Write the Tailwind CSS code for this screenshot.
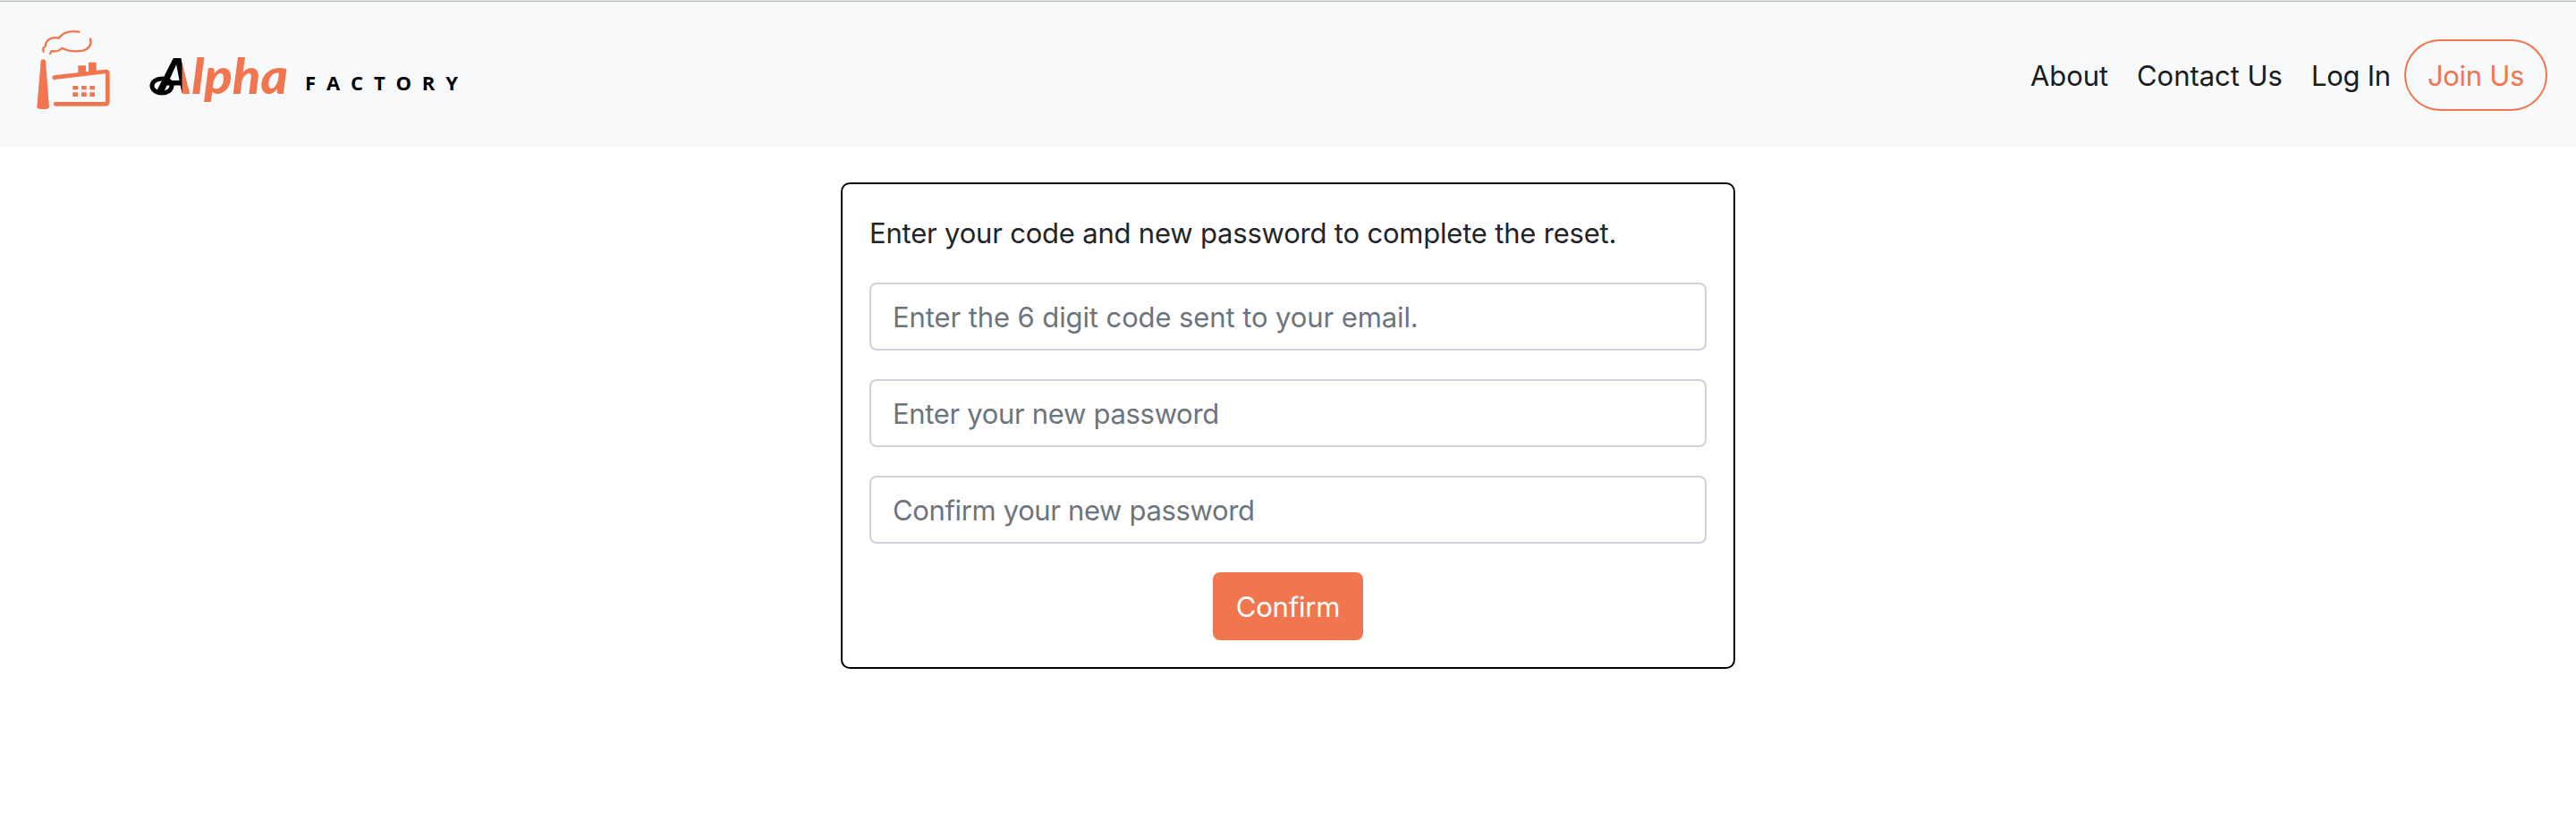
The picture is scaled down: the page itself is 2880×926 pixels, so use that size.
<!DOCTYPE html>
<html lang="en">
<head>
<meta charset="utf-8">
<title>Alpha Factory</title>
<script src="https://cdn.jsdelivr.net/npm/@tailwindcss/browser@4"></script>
</head>
<body class="min-h-screen bg-white font-['Inter',sans-serif] text-[31px] leading-[48px] font-normal text-[#212529]">
<header class="flex h-[164px] items-start justify-between border-t border-[#e4e6e6] bg-[#f8f9fb] pr-8 pl-10 shadow-[inset_0_1px_0_#b4b8b8]">
  <a href="#" class="flex pt-[31px]" aria-label="Alpha Factory">
    <svg class="h-[92px] w-[84px]" viewBox="60 96 252 276" fill="none" stroke="#f1764f" stroke-linecap="round" stroke-linejoin="round">
      <path d="M86 173C83 163 86 158 92 156C93 134 112 122 138 128C153 105 180 103 205 107" stroke-width="7"/>
      <path d="M243 130C248 150 238 164 218 170C194 174 165 170 148 161C137 173 126 174 113 171L108 180" stroke-width="7"/>
      <path d="M77 205Q78 199 85 199Q92 199 93 205L105 360Q104 366 85 366Q65 366 64 360Z" fill="#f1764f" stroke="none"/>
      <path d="M122 260L293 240Q301 239 301 246V341Q301 349 293 349H126" stroke-width="14"/>
      <path d="M202 220h26v28h-26zM237 209h26v36h-26zM184 288h17v13h-17zM213 288h17v13h-17zM241 288h17v13h-17zM184 310h17v14h-17zM213 310h17v14h-17zM241 310h17v14h-17z" fill="#f1764f" stroke="none"/>
    </svg>
    <svg class="h-[92px] w-[400px]" viewBox="124 32 400 92">
      <defs>
        <linearGradient id="wordmark" gradientUnits="userSpaceOnUse" x1="203" y1="80" x2="204" y2="80">
          <stop offset="0" stop-color="#000"/><stop offset="1" stop-color="#f1764f"/>
        </linearGradient>
      </defs>
      <ellipse cx="181" cy="96" rx="11" ry="8" fill="none" stroke="#000" stroke-width="5"/>
      <text x="176" y="105" textLength="146" lengthAdjust="spacingAndGlyphs" fill="url(#wordmark)" class="font-['Lato',sans-serif] text-[56px] font-black italic">Alpha</text>
      <text x="341" y="101" textLength="171" lengthAdjust="spacing" fill="#000" class="font-['Open_Sans',sans-serif] text-[22px] font-bold">FACTORY</text>
    </svg>
  </a>
  <nav class="flex items-center pt-[43px] tracking-[-0.05px] text-[#1b1b1b]">
    <a href="#" class="w-[119px] pt-px whitespace-nowrap">About</a>
    <a href="#" class="w-[195px] pt-px whitespace-nowrap">Contact Us</a>
    <a href="#" class="w-[104px] pt-px tracking-[-0.3px] whitespace-nowrap">Log In</a>
    <a href="#" class="flex h-20 w-40 items-center justify-center rounded-[40px] border-2 border-[#f1764f] pt-px tracking-[-0.3px] whitespace-nowrap text-[#f1764f]">Join Us</a>
  </nav>
</header>
<main class="flex justify-center pt-10">
  <form class="flex h-[544px] w-[1000px] flex-col items-center rounded-[10px] border-2 border-black px-[30px] pt-[31px]">
    <p class="mb-[31px] w-full tracking-[-0.2px] whitespace-nowrap">Enter your code and new password to complete the reset.</p>
    <div class="flex w-full flex-col items-center gap-8">
      <input class="h-[76px] w-full shrink-0 rounded-lg border-2 border-[#ced4da] px-6 tracking-[-0.1px] placeholder:text-[#6c757d] placeholder:opacity-100" placeholder="Enter the 6 digit code sent to your email.">
      <input class="h-[76px] w-full shrink-0 rounded-lg border-2 border-[#ced4da] px-6 tracking-[-0.32px] placeholder:text-[#6c757d] placeholder:opacity-100" placeholder="Enter your new password">
      <input class="h-[76px] w-full shrink-0 rounded-lg border-2 border-[#ced4da] px-6 tracking-[-0.36px] placeholder:text-[#6c757d] placeholder:opacity-100" placeholder="Confirm your new password">
      <button type="button" class="h-[76px] w-[168px] shrink-0 rounded-lg bg-[#f1764f] pt-px tracking-[-0.2px] text-white">Confirm</button>
    </div>
  </form>
</main>
</body>
</html>
